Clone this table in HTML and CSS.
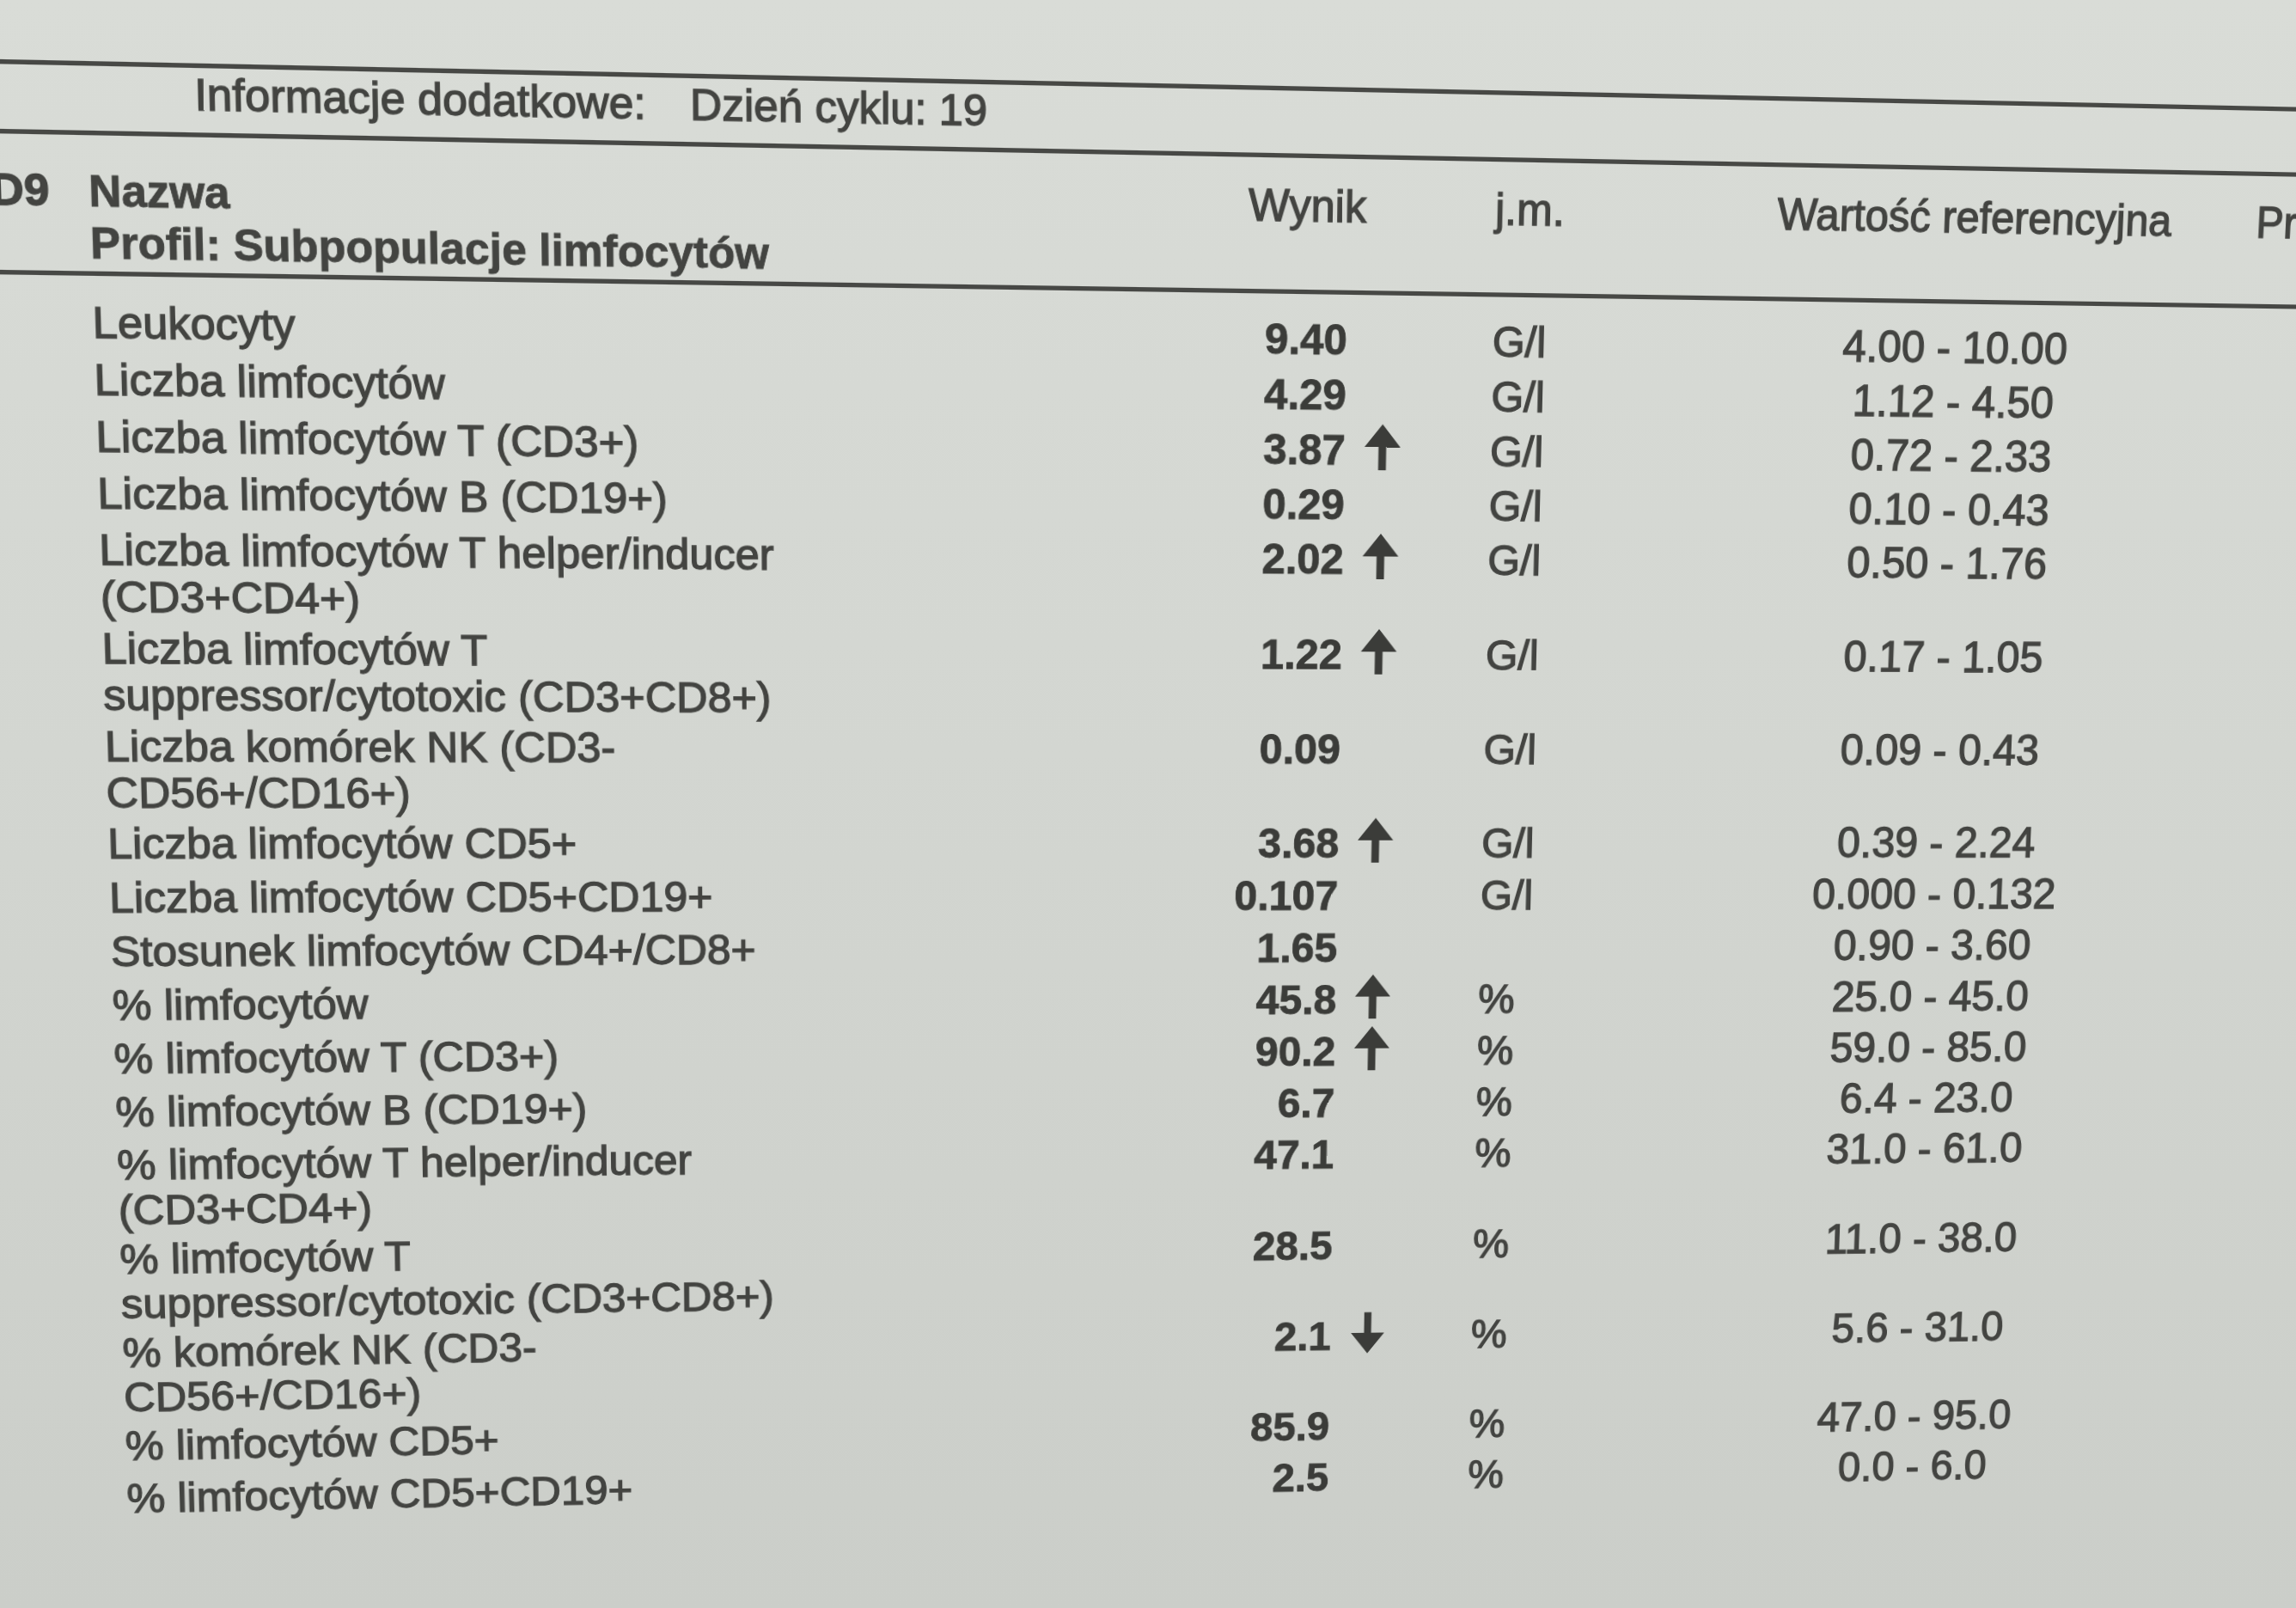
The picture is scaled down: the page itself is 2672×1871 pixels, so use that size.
FILE: index.html
```html
<!DOCTYPE html>
<html lang="pl">
<head>
<meta charset="utf-8">
<title>Subpopulacje limfocytów</title>
<link rel="stylesheet" href="styles.css">
</head>
<body>
<div class="sheet">
  <div class="rule"></div>
  <div class="info"><span>Informacje dodatkowe:</span><span>Dzień cyklu: 19</span></div>
  <div class="rule"></div>
  <div class="head">
    <div class="code">D9</div>
    <div class="hname"><div>Nazwa</div><div>Profil: Subpopulacje limfocytów</div></div>
    <div class="hcol">Wynik</div>
    <div class="hcol">j.m.</div>
    <div class="hcol">Wartość referencyjna</div>
    <div class="hcol">Pr</div>
  </div>
  <div class="rule"></div>
  <div class="rows">
    <div class="row"><div class="name">Leukocyty</div><div class="val">9.40</div><div class="flag"></div><div class="unit">G/l</div><div class="ref">4.00 - 10.00</div></div>
    <div class="row"><div class="name">Liczba limfocytów</div><div class="val">4.29</div><div class="flag"></div><div class="unit">G/l</div><div class="ref">1.12 - 4.50</div></div>
    <div class="row"><div class="name">Liczba limfocytów T (CD3+)</div><div class="val">3.87</div><div class="flag"><svg class="arrow" viewBox="0 0 42 52"><path d="M21 0 L42 26 H25.5 V52 H16.5 V26 H0 Z"/></svg></div><div class="unit">G/l</div><div class="ref">0.72 - 2.33</div></div>
    <div class="row"><div class="name">Liczba limfocytów B (CD19+)</div><div class="val">0.29</div><div class="flag"></div><div class="unit">G/l</div><div class="ref">0.10 - 0.43</div></div>
    <div class="row two"><div class="name">Liczba limfocytów T helper/inducer<br>(CD3+CD4+)</div><div class="val">2.02</div><div class="flag"><svg class="arrow" viewBox="0 0 42 52"><path d="M21 0 L42 26 H25.5 V52 H16.5 V26 H0 Z"/></svg></div><div class="unit">G/l</div><div class="ref">0.50 - 1.76</div></div>
    <div class="row two"><div class="name">Liczba limfocytów T<br>suppressor/cytotoxic (CD3+CD8+)</div><div class="val">1.22</div><div class="flag"><svg class="arrow" viewBox="0 0 42 52"><path d="M21 0 L42 26 H25.5 V52 H16.5 V26 H0 Z"/></svg></div><div class="unit">G/l</div><div class="ref">0.17 - 1.05</div></div>
    <div class="row two"><div class="name">Liczba komórek NK (CD3-<br>CD56+/CD16+)</div><div class="val">0.09</div><div class="flag"></div><div class="unit">G/l</div><div class="ref">0.09 - 0.43</div></div>
    <div class="row mid"><div class="name">Liczba limfocytów CD5+</div><div class="val">3.68</div><div class="flag"><svg class="arrow" viewBox="0 0 42 52"><path d="M21 0 L42 26 H25.5 V52 H16.5 V26 H0 Z"/></svg></div><div class="unit">G/l</div><div class="ref">0.39 - 2.24</div></div>
    <div class="row mid"><div class="name">Liczba limfocytów CD5+CD19+</div><div class="val">0.107</div><div class="flag"></div><div class="unit">G/l</div><div class="ref">0.000 - 0.132</div></div>
    <div class="row mid"><div class="name">Stosunek limfocytów CD4+/CD8+</div><div class="val">1.65</div><div class="flag"></div><div class="unit"></div><div class="ref">0.90 - 3.60</div></div>
    <div class="row mid"><div class="name">% limfocytów</div><div class="val">45.8</div><div class="flag"><svg class="arrow" viewBox="0 0 42 52"><path d="M21 0 L42 26 H25.5 V52 H16.5 V26 H0 Z"/></svg></div><div class="unit">%</div><div class="ref">25.0 - 45.0</div></div>
    <div class="row mid"><div class="name">% limfocytów T (CD3+)</div><div class="val">90.2</div><div class="flag"><svg class="arrow" viewBox="0 0 42 52"><path d="M21 0 L42 26 H25.5 V52 H16.5 V26 H0 Z"/></svg></div><div class="unit">%</div><div class="ref">59.0 - 85.0</div></div>
    <div class="row mid"><div class="name">% limfocytów B (CD19+)</div><div class="val">6.7</div><div class="flag"></div><div class="unit">%</div><div class="ref">6.4 - 23.0</div></div>
    <div class="row two"><div class="name">% limfocytów T helper/inducer<br>(CD3+CD4+)</div><div class="val">47.1</div><div class="flag"></div><div class="unit">%</div><div class="ref">31.0 - 61.0</div></div>
    <div class="row two"><div class="name">% limfocytów T<br>suppressor/cytotoxic (CD3+CD8+)</div><div class="val">28.5</div><div class="flag"></div><div class="unit">%</div><div class="ref">11.0 - 38.0</div></div>
    <div class="row two"><div class="name">% komórek NK (CD3-<br>CD56+/CD16+)</div><div class="val">2.1</div><div class="flag"><svg class="arrow down" viewBox="0 0 42 52"><path d="M16.5 0 H25.5 V26 H42 L21 52 L0 26 H16.5 Z"/></svg></div><div class="unit">%</div><div class="ref">5.6 - 31.0</div></div>
    <div class="row"><div class="name">% limfocytów CD5+</div><div class="val">85.9</div><div class="flag"></div><div class="unit">%</div><div class="ref">47.0 - 95.0</div></div>
    <div class="row"><div class="name">% limfocytów CD5+CD19+</div><div class="val">2.5</div><div class="flag"></div><div class="unit">%</div><div class="ref">0.0 - 6.0</div></div>
  </div>
</div>
</body>
</html>
```
FILE: styles.css
```css
html, body {
  margin: 0;
  padding: 0;
  overflow: hidden;
}

body {
  width: 2672px;
  height: 1871px;
  background: linear-gradient(180deg, #d9dcd7 0%, #d4d7d2 40%, #cbcec9 100%);
  font-family: "Liberation Sans", Arial, sans-serif;
  color: #434441;
  -webkit-text-stroke: 1.3px #434441;
}

.sheet {
  width: 2660px;
  box-sizing: border-box;
  padding-top: 107.5px;
  transform-origin: 0 0;
  transform: matrix3d(1.096167, 0.024574, 0, 0.0000253139,
                      0.035599, 1.105314, 0, 0.0000340909,
                      0, 0, 1, 0,
                      -44.809, -51.084, 0, 1);
}

.rule {
  height: 5px;
  background: #474845;
}

.info {
  display: flex;
  gap: 49px;
  padding: 2.5px 0 14.7px 245px;
  font-size: 49px;
  line-height: 52px;
  white-space: nowrap;
}

.head {
  display: grid;
  grid-template-columns: 128px 1289px 285px 331px 573px 1fr;
  align-items: start;
  padding: 31.3px 0 3.4px 0;
  font-size: 49px;
  line-height: 56px;
  white-space: nowrap;
}

.code {
  font-weight: bold;
  padding-left: 23px;
}

.hname {
  font-weight: bold;
  -webkit-text-stroke-width: 0.8px;
}

.hcol {
  font-size: 50px;
  margin-top: -6px;
}

.rows {
  padding-top: 23.4px;
}

.row {
  display: grid;
  grid-template-columns: 1105px 300px 169px 298px 500px;
  align-items: start;
  height: 62px;
  padding-left: 128px;
  font-size: 49px;
  line-height: 52px;
  white-space: nowrap;
}

.row.mid {
  height: 61px;
}

.row.two {
  height: 109px;
}

.val {
  font-weight: bold;
  text-align: right;
  color: #3b3c39;
  -webkit-text-stroke: 0.8px #3b3c39;
}

.flag {
  display: flex;
}

.arrow {
  display: block;
  width: 42px;
  height: 52px;
  margin: -2.4px 0 0 22px;
  fill: #3b3c39;
}

.arrow.down {
  width: 40px;
  margin-left: 24px;
}

.ref {
  text-align: center;
  font-size: 50.5px;
}
```
